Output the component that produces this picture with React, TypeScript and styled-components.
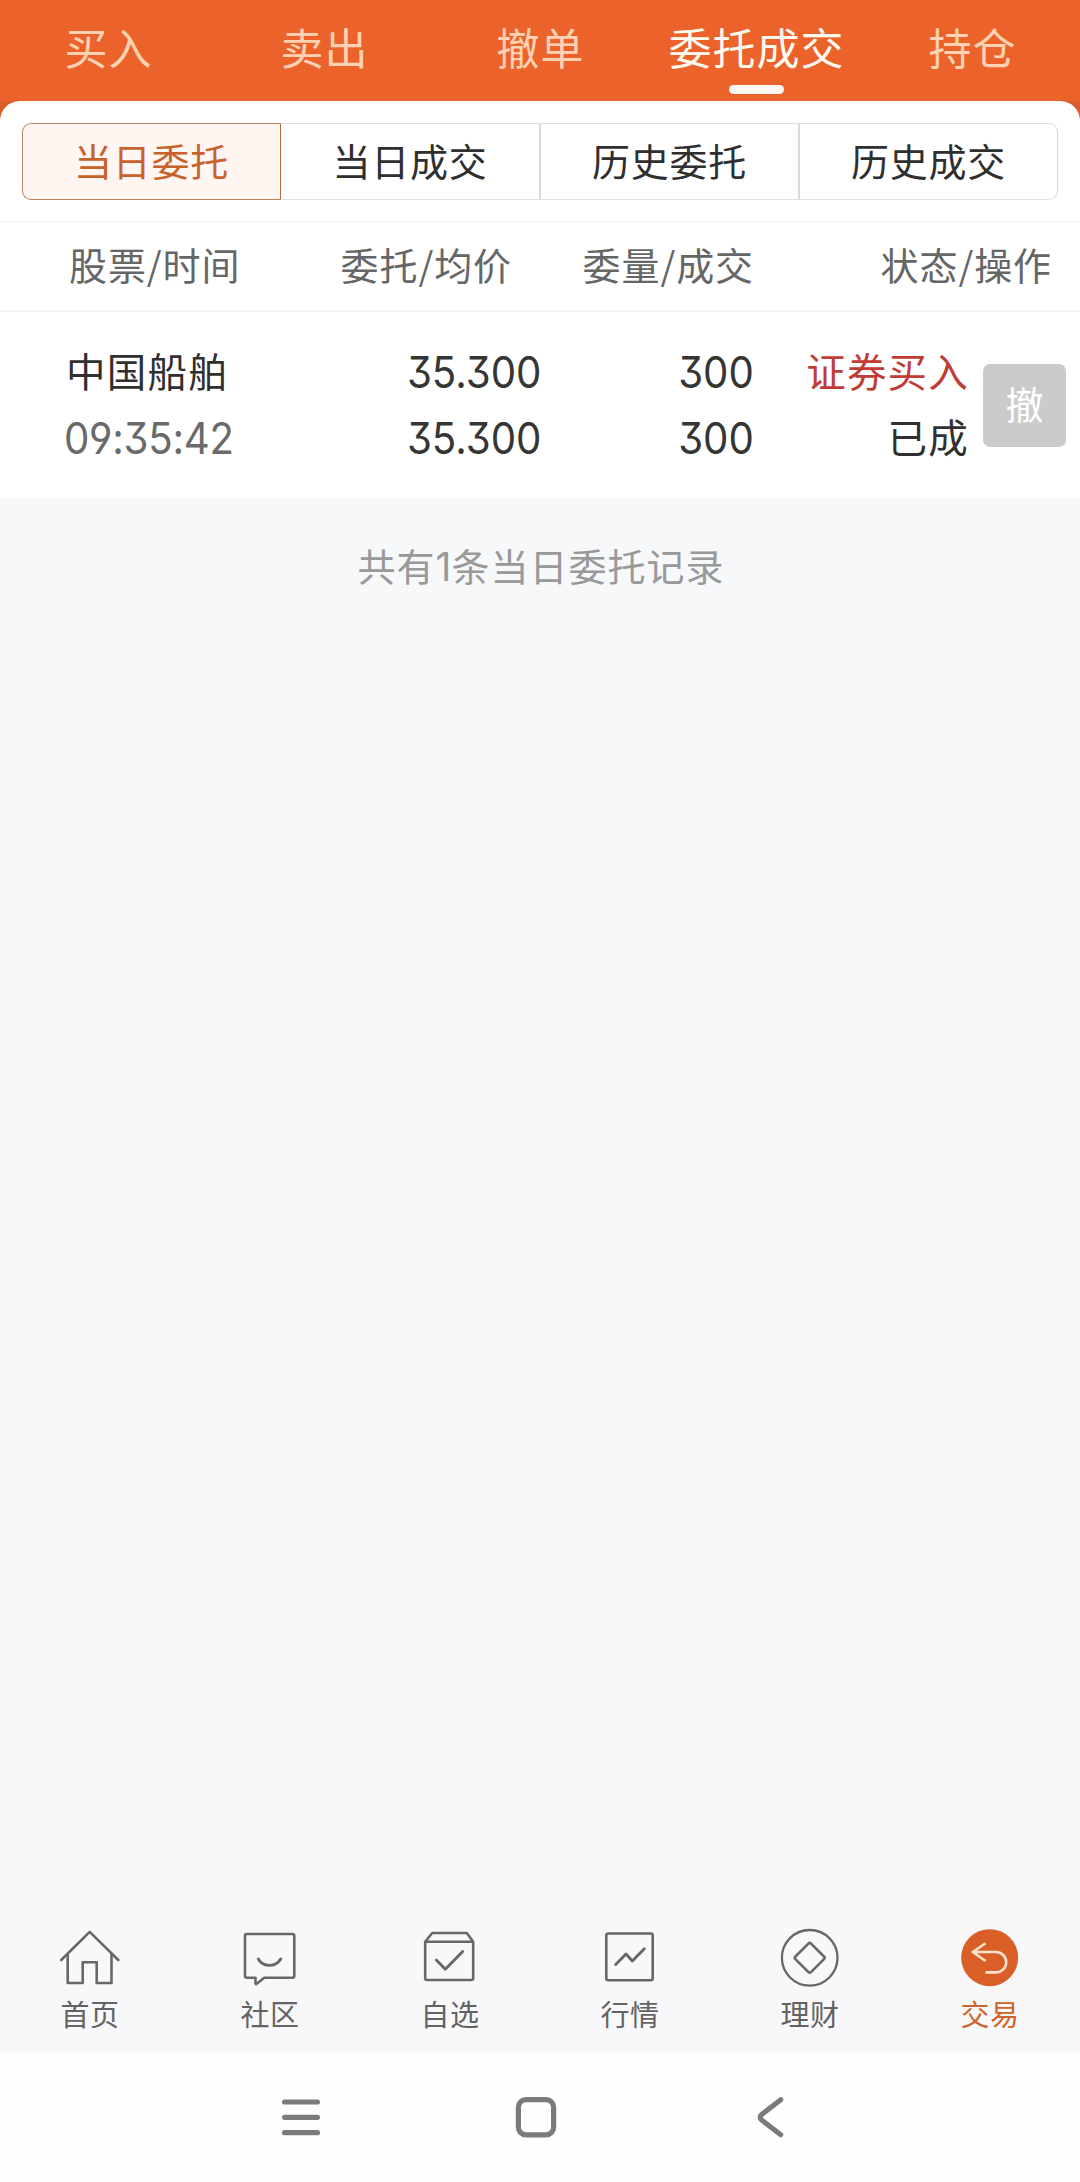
import React from "react";
import styled, { createGlobalStyle } from "styled-components";

const GlobalStyle = createGlobalStyle`
  * { box-sizing: border-box; }
  body {
    margin: 0;
    background: #f7f8fa;
    font-family: "Noto Sans CJK SC", sans-serif;
    -webkit-font-smoothing: antialiased;
  }
`;

const Screen = styled.div`
  width: 1080px;
  height: 2182px;
  display: flex;
  flex-direction: column;
  overflow: hidden;
  background: #f7f8fa;
`;

const Header = styled.header`
  background: linear-gradient(#ec622b 0 101px, #d95c2a 101px);
`;

const TopTabs = styled.nav`
  height: 101px;
  display: grid;
  grid-template-columns: repeat(5, 1fr);
`;

const TopTab = styled.div<{ $active?: boolean }>`
  display: flex;
  flex-direction: column;
  align-items: center;
  padding-top: 16px;
  font-size: 43px;
  line-height: 60px;
  letter-spacing: 1px;
  text-indent: 1px;
  white-space: nowrap;
  color: ${(p) => (p.$active ? "#fffaf0" : "#ffd2b4")};
`;

const Indicator = styled.span`
  width: 55px;
  height: 9px;
  margin-top: 9px;
  border-radius: 5px;
  background: #fff8f2;
`;

const Sheet = styled.section`
  height: 120px;
  padding: 22px;
  background: #fff;
  border-radius: 20px 20px 0 0;
`;

const Segments = styled.div`
  display: grid;
  grid-template-columns: 259px 260px 259px 258px;
  height: 77px;
`;

const Segment = styled.div<{ $active?: boolean }>`
  display: flex;
  align-items: center;
  justify-content: center;
  padding-bottom: 4px;
  font-size: 38px;
  letter-spacing: 0.8px;
  color: ${(p) => (p.$active ? "#c8622b" : "#2f2f2f")};
  background: ${(p) => (p.$active ? "#fff6f2" : "#fff")};
  border: 1px solid ${(p) => (p.$active ? "#b9835c" : "#dde0e1")};
  border-right: ${(p) => (p.$active ? "1px solid #b9683c" : "2px solid #d8dbdc")};
  border-left-width: ${(p) => (p.$active ? 1 : 0)}px;
  &:first-child { border-radius: 9px 0 0 9px; }
  &:last-child {
    border-radius: 0 9px 9px 0;
    border-right: 1px solid #d3d6d7;
  }
`;

const Columns = styled.div`
  display: grid;
  grid-template-columns: 294px 218px 242px 1fr;
`;

const TableHead = styled(Columns)`
  height: 91px;
  border-top: 1px solid #f4f4f4;
  border-bottom: 2px solid #f4f4f4;
  background: #fff;
  padding-right: 28px;
  font-size: 38px;
  line-height: 84px;
  letter-spacing: 0.9px;
  color: #666;
  text-align: right;
  & > :first-child { text-align: left; padding-left: 69px; }
`;

const OrderRow = styled.div`
  display: flex;
  align-items: center;
  height: 186px;
  background: #fff;
  padding: 0 14px 0 66px;
`;

const Cell = styled.div<{ $width: number; $align?: string }>`
  width: ${(p) => p.$width}px;
  display: flex;
  flex-direction: column;
  align-items: ${(p) => p.$align ?? "flex-end"};
`;

const Line = styled.span<{ $color?: string }>`
  height: 66px;
  line-height: 62px;
  font-size: 39.5px;
  letter-spacing: 1.2px;
  white-space: nowrap;
  color: ${(p) => p.$color ?? "#303030"};
`;

const Digits = styled(Line)`
  font-family: Inter, sans-serif;
  font-size: 43.5px;
  line-height: 66px;
  letter-spacing: 0;
  transform: scaleX(0.925);
  transform-origin: right;
  color: ${(p) => p.$color ?? "#353535"};
  font-feature-settings: "cv04", "cv09";
`;

const Time = styled(Digits)`
  margin-left: -2px;
  letter-spacing: -0.3px;
  transform-origin: left;
`;

const CancelButton = styled.button`
  width: 83px;
  height: 83px;
  margin-left: 14px;
  padding: 0 0 6px;
  border: 0;
  border-radius: 7px;
  background: #cbcbcb;
  color: #fff;
  font: 400 38px "Noto Sans CJK SC", sans-serif;
`;

const Content = styled.main`
  flex: 1;
  padding: 37px 0 0 2px;
  text-align: center;
  font-size: 38px;
  line-height: 60px;
  letter-spacing: 1px;
  color: #999;
`;

const Count = styled.span`
  font-family: Inter, sans-serif;
  font-size: 39px;
  letter-spacing: 0;
`;

const BottomNav = styled.nav`
  height: 130px;
  display: grid;
  grid-template-columns: repeat(6, 1fr);
  background: #f8f8fa;
`;

const NavItem = styled.div<{ $active?: boolean }>`
  display: flex;
  flex-direction: column;
  align-items: center;
  padding-top: 5px;
  color: ${(p) => (p.$active ? "#d2622b" : "#636363")};
  font-size: 29px;
  line-height: 40px;
  letter-spacing: 0.6px;
  svg { display: block; margin-bottom: 5px; }
`;

const SystemBar = styled.footer`
  height: 129px;
  display: flex;
  justify-content: center;
  gap: 191px;
  padding: 42px 8px 0 0;
  background: #fefefe;
`;

const NavIcon = ({ children }: { children: React.ReactNode }) => (
  <svg width="60" height="60" viewBox="0 0 60 60" fill="none" stroke="#686868" strokeWidth="2.6" strokeLinecap="round" strokeLinejoin="round">
    {children}
  </svg>
);

const SystemIcon = ({ children }: { children: React.ReactNode }) => (
  <svg width="44" height="44" viewBox="0 0 44 44" fill="none" stroke="#7b7b7b" strokeWidth="5.2" strokeLinecap="round" strokeLinejoin="round">
    {children}
  </svg>
);

const navItems = [
  { label: "首页", icon: <><path d="M1.2 32 29.7 3.9 58.3 32" /><path d="M7.7 26.5V55H22.7V34.3H36.7V55H51.5V26.5" /></> },
  { label: "社区", icon: <><path d="M7 6H52.3Q54.3 6 54.3 8V47.7Q54.3 49.7 52.3 49.7H24.3L16.4 56Q15.5 56.4 15.5 55V49.7H7Q5 49.7 5 47.7V8Q5 6 7 6Z" /><path d="M18.3 31A13 13 0 0 0 40.7 31" strokeWidth="2.9" /></> },
  { label: "自选", icon: <><path d="M5.2 13.7 12.2 5H46.8L53.2 13.7V50Q53.2 52 51.2 52H7.2Q5.2 52 5.2 50ZH53.2" /><path d="M16.3 32 25.3 41.3 42.7 23.5" strokeWidth="2.9" /></> },
  { label: "行情", icon: <><rect x="6.3" y="5.5" width="46.4" height="46.8" rx="2" /><path d="M15.7 36.5 26 26 32.3 33 44.3 20.8" strokeWidth="2.9" /></> },
  { label: "理财", icon: <><circle cx="29.7" cy="29.8" r="27.8" strokeWidth="2.3" /><path d="M28.4 15.6Q29.7 14.3 31 15.6L44 28.5Q45.3 29.8 44 31.1L31 44.1Q29.7 45.4 28.4 44.1L15.4 31.1Q14.1 29.8 15.4 28.5Z" /></> },
  { label: "交易", active: true, icon: <><circle cx="29.7" cy="29.7" r="28.5" fill="#d95f27" stroke="none" /><path d="M25.5 15.2 12.9 24 25.5 33M13.5 24H36A10.2 10.2 0 0 1 36 44.4H25.5" stroke="#ffe3cd" strokeLinecap="butt" strokeLinejoin="miter" /></> },
];

export default function App() {
  return (
    <Screen>
      <GlobalStyle />
      <Header>
        <TopTabs>
          <TopTab>买入</TopTab>
          <TopTab>卖出</TopTab>
          <TopTab>撤单</TopTab>
          <TopTab $active>委托成交<Indicator /></TopTab>
          <TopTab>持仓</TopTab>
        </TopTabs>
        <Sheet>
          <Segments>
            <Segment $active>当日委托</Segment>
            <Segment>当日成交</Segment>
            <Segment>历史委托</Segment>
            <Segment>历史成交</Segment>
          </Segments>
        </Sheet>
      </Header>
      <TableHead>
        <span>股票/时间</span>
        <span>委托/均价</span>
        <span>委量/成交</span>
        <span>状态/操作</span>
      </TableHead>
      <OrderRow>
        <Cell $width={260} $align="flex-start">
          <Line>中国船舶</Line>
          <Time $color="#6a6a6a">09:35:42</Time>
        </Cell>
        <Cell $width={215}>
          <Digits>35.300</Digits>
          <Digits>35.300</Digits>
        </Cell>
        <Cell $width={213}>
          <Digits>300</Digits>
          <Digits>300</Digits>
        </Cell>
        <Cell $width={215}>
          <Line $color="#c13c35">证券买入</Line>
          <Line>已成</Line>
        </Cell>
        <CancelButton>撤</CancelButton>
      </OrderRow>
      <Content>共有<Count>1</Count>条当日委托记录</Content>
      <BottomNav>
        {navItems.map((item) => (
          <NavItem key={item.label} $active={item.active}>
            <NavIcon>{item.icon}</NavIcon>
            {item.label}
          </NavItem>
        ))}
      </BottomNav>
      <SystemBar>
        <SystemIcon><path d="M5.6 7H38.4M5.6 22.3H38.4M5.6 37.7H38.4" /></SystemIcon>
        <SystemIcon><rect x="4.4" y="4.6" width="35.2" height="35.2" rx="7.5" /></SystemIcon>
        <SystemIcon><path d="M31.7 4.7 13 19.3Q9.5 22.3 13 25.3L31.7 39.7" /></SystemIcon>
      </SystemBar>
    </Screen>
  );
}
